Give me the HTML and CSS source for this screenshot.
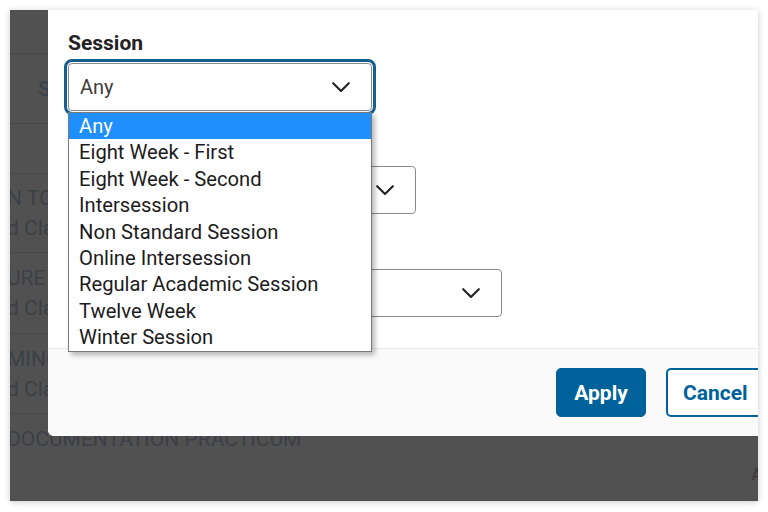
FILE: index.html
```html
<!DOCTYPE html>
<html lang="en">
<head>
<meta charset="utf-8">
<title>Session filter</title>
<link rel="stylesheet" href="styles.css">
</head>
<body>
<div class="screen">
  <div class="page">
    <div class="topbar"></div>
    <div class="thead"><span class="th">S</span></div>
    <div class="row r1"></div>
    <div class="row r2"><div class="cell">N TO</div><div class="cell">d Cla</div></div>
    <div class="row r3"><div class="cell">URE</div><div class="cell">d Cla</div></div>
    <div class="row r4"><div class="cell">MINC</div><div class="cell">d Cla</div></div>
    <div class="row r5"><div class="cell">DOCUMENTATION PRACTICUM</div></div>
    <div class="pagefoot"><span class="stray">A</span></div>
  </div>

  <div class="modal">
    <div class="modal-body">
      <div class="field">
        <label class="label">Session</label>
        <div class="select focused">
          <span class="value">Any</span>
          <svg class="chev" width="18" height="11" viewBox="0 0 18 11"><path d="M1.2 1.2 L9 9 L16.8 1.2" fill="none" stroke="#222" stroke-width="2.1" stroke-linecap="round" stroke-linejoin="round"/></svg>
        </div>
        <ul class="listbox">
          <li class="opt sel">Any</li>
          <li class="opt">Eight Week - First</li>
          <li class="opt">Eight Week - Second</li>
          <li class="opt">Intersession</li>
          <li class="opt">Non Standard Session</li>
          <li class="opt">Online Intersession</li>
          <li class="opt">Regular Academic Session</li>
          <li class="opt">Twelve Week</li>
          <li class="opt">Winter Session</li>
        </ul>
      </div>
      <div class="field">
        <label class="label hidden-label">Campus</label>
        <div class="select w2">
          <span class="value"></span>
          <svg class="chev" width="18" height="11" viewBox="0 0 18 11"><path d="M1.2 1.2 L9 9 L16.8 1.2" fill="none" stroke="#222" stroke-width="2.1" stroke-linecap="round" stroke-linejoin="round"/></svg>
        </div>
      </div>
      <div class="field">
        <label class="label hidden-label">Units</label>
        <div class="select w3">
          <span class="value"></span>
          <svg class="chev" width="18" height="11" viewBox="0 0 18 11"><path d="M1.2 1.2 L9 9 L16.8 1.2" fill="none" stroke="#222" stroke-width="2.1" stroke-linecap="round" stroke-linejoin="round"/></svg>
        </div>
      </div>
    </div>
    <div class="modal-footer">
      <button class="btn primary">Apply</button>
      <button class="btn secondary">Cancel</button>
    </div>
  </div>
</div>
</body>
</html>
```

FILE: styles.css
```css
* { box-sizing: border-box; }
html, body { margin: 0; padding: 0; background: #fff; }
body { font-family: Roboto, "Liberation Sans", Arial, sans-serif; }

.screen {
  position: relative;
  margin: 10px;
  width: 748px;
  height: 491px;
  overflow: hidden;
  box-shadow: 0 1px 6px rgba(0,0,0,0.22);
}

.page {
  height: 100%;
  background: #515151;
  color: #3b4047;
  font-size: 21px;
}
.topbar { height: 44px; border-bottom: 1px solid #464646; }
.thead {
  height: 70px;
  border-bottom: 1px solid #464646;
  display: flex;
  align-items: center;
  padding-left: 28px;
}
.th { font-weight: 700; color: #3a444e; }
.row {
  border-bottom: 1px solid #484848;
  display: flex;
  flex-direction: column;
  justify-content: center;
  white-space: nowrap;
}
.cell { line-height: 30px; margin-left: -3px; }
.r1 { height: 50px; }
.r2 { height: 79px; }
.r3 { height: 81px; }
.r4 { height: 80px; }
.r5 { height: 49px; justify-content: flex-start; padding-top: 10px; border-bottom: none; }
.pagefoot {
  display: flex;
  justify-content: flex-end;
  margin-top: 2px;
  margin-right: -4px;
  line-height: 20px;
}
.stray { color: #3d3535; font-size: 16px; }

.modal {
  position: absolute;
  left: 38px;
  top: 0;
  width: 740px;
  height: 426px;
  background: #fff;
  border-bottom-left-radius: 6px;
  display: flex;
  flex-direction: column;
  overflow: hidden;
}
.modal-body {
  flex: 1;
  padding: 21px 20px 0 20px;
}
.field {
  position: relative;
  display: flex;
  flex-direction: column;
  align-items: flex-start;
  gap: 8px;
}
.field + .field { margin-top: 23px; }
.label {
  font-size: 21px;
  line-height: 24px;
  font-weight: 700;
  color: #222;
  height: 24px;
}
.hidden-label { visibility: hidden; }
.select {
  width: 304px;
  height: 48px;
  border: 1px solid #8a8a8a;
  border-radius: 4px;
  background: #fff;
  display: flex;
  align-items: center;
  justify-content: space-between;
  padding: 0 21px 0 11px;
}
.select.focused {
  outline: 3px solid #175e90;
  outline-offset: 1px;
}
.select.w2 { width: 348px; }
.select.w3 { width: 434px; }
.value { font-size: 20px; color: #3e3e3e; }
.chev { display: block; }

.listbox {
  position: absolute;
  z-index: 5;
  left: 0;
  top: 81px;
  width: 304px;
  margin: 0;
  padding: 0;
  list-style: none;
  background: #fff;
  border: 1px solid #7a7a7a;
  box-shadow: 3px 3px 5px rgba(0,0,0,0.28);
}
.opt {
  height: 26.4px;
  line-height: 26.4px;
  padding-left: 10px;
  font-size: 20.2px;
  color: #1c1c1c;
  white-space: nowrap;
}
.opt.sel { background: #1e8ffc; color: #fff; }

.modal-footer {
  height: 88px;
  background: #fafafa;
  border-top: 1px solid #ebebeb;
  display: flex;
  justify-content: flex-end;
  align-items: center;
  gap: 20px;
  padding-right: 20px;
}
.btn {
  height: 49px;
  border-radius: 5px;
  font-family: Roboto, "Liberation Sans", Arial, sans-serif;
  font-size: 21px;
  font-weight: 700;
  cursor: pointer;
}
.btn.primary {
  width: 90px;
  background: #00629b;
  border: 1px solid #00629b;
  color: #fff;
}
.btn.secondary {
  width: 102px;
  background: #fff;
  border: 2px solid #00629b;
  color: #00629b;
  text-align: left;
  padding-left: 15px;
}
```
